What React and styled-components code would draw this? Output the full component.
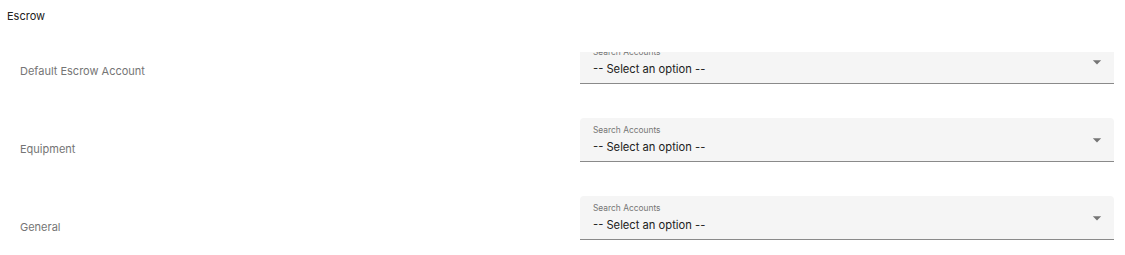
import React from "react";
import styled, { createGlobalStyle } from "styled-components";

const GlobalStyle = createGlobalStyle`
  body {
    margin: 0;
    background: #fff;
    font-family: Inter, "Noto Sans", sans-serif;
  }
`;

const Page = styled.div`
  width: 1125px;
  height: 255px;
  overflow: hidden;
`;

const Heading = styled.div`
  padding: 9px 7px 0;
  height: 52px;
  box-sizing: border-box;
  font-size: 11px;
  color: #212121;
`;

const Viewport = styled.div`
  height: 203px;
  overflow: hidden;
`;

const List = styled.div`
  margin-top: -12px;
  display: flex;
  flex-direction: column;
  gap: 34px;
`;

const Row = styled.div`
  display: grid;
  grid-template-columns: 560px 534px;
  padding-left: 20px;
  align-items: center;
`;

const Label = styled.div`
  font-size: 11px;
  color: #757575;
  padding-top: 18px;
`;

const Field = styled.div`
  height: 44px;
  box-sizing: border-box;
  background: #f5f5f5;
  border-radius: 4px 4px 0 0;
  border-bottom: 1px solid #8a8a8a;
  padding: 0 7px 0 13px;
  display: flex;
  align-items: center;
`;

const FieldText = styled.div`
  flex: 1;
  display: flex;
  flex-direction: column;
  gap: 4px;
`;

const FieldLabel = styled.span`
  font-size: 8.4px;
  line-height: 10px;
  color: #757575;
`;

const FieldValue = styled.span`
  font-size: 11.2px;
  line-height: 16px;
  color: #212121;
`;

const Arrow = styled.svg`
  width: 20px;
  height: 20px;
  fill: #757575;
`;

const rows = ["Default Escrow Account", "Equipment", "General"];

export default function App() {
  return (
    <Page>
      <GlobalStyle />
      <Heading>Escrow</Heading>
      <Viewport>
        <List>
          {rows.map((name) => (
            <Row key={name}>
              <Label>{name}</Label>
              <Field>
                <FieldText>
                  <FieldLabel>Search Accounts</FieldLabel>
                  <FieldValue>-- Select an option --</FieldValue>
                </FieldText>
                <Arrow viewBox="0 0 24 24">
                  <path d="M7 10l5 5 5-5z" />
                </Arrow>
              </Field>
            </Row>
          ))}
        </List>
      </Viewport>
    </Page>
  );
}
